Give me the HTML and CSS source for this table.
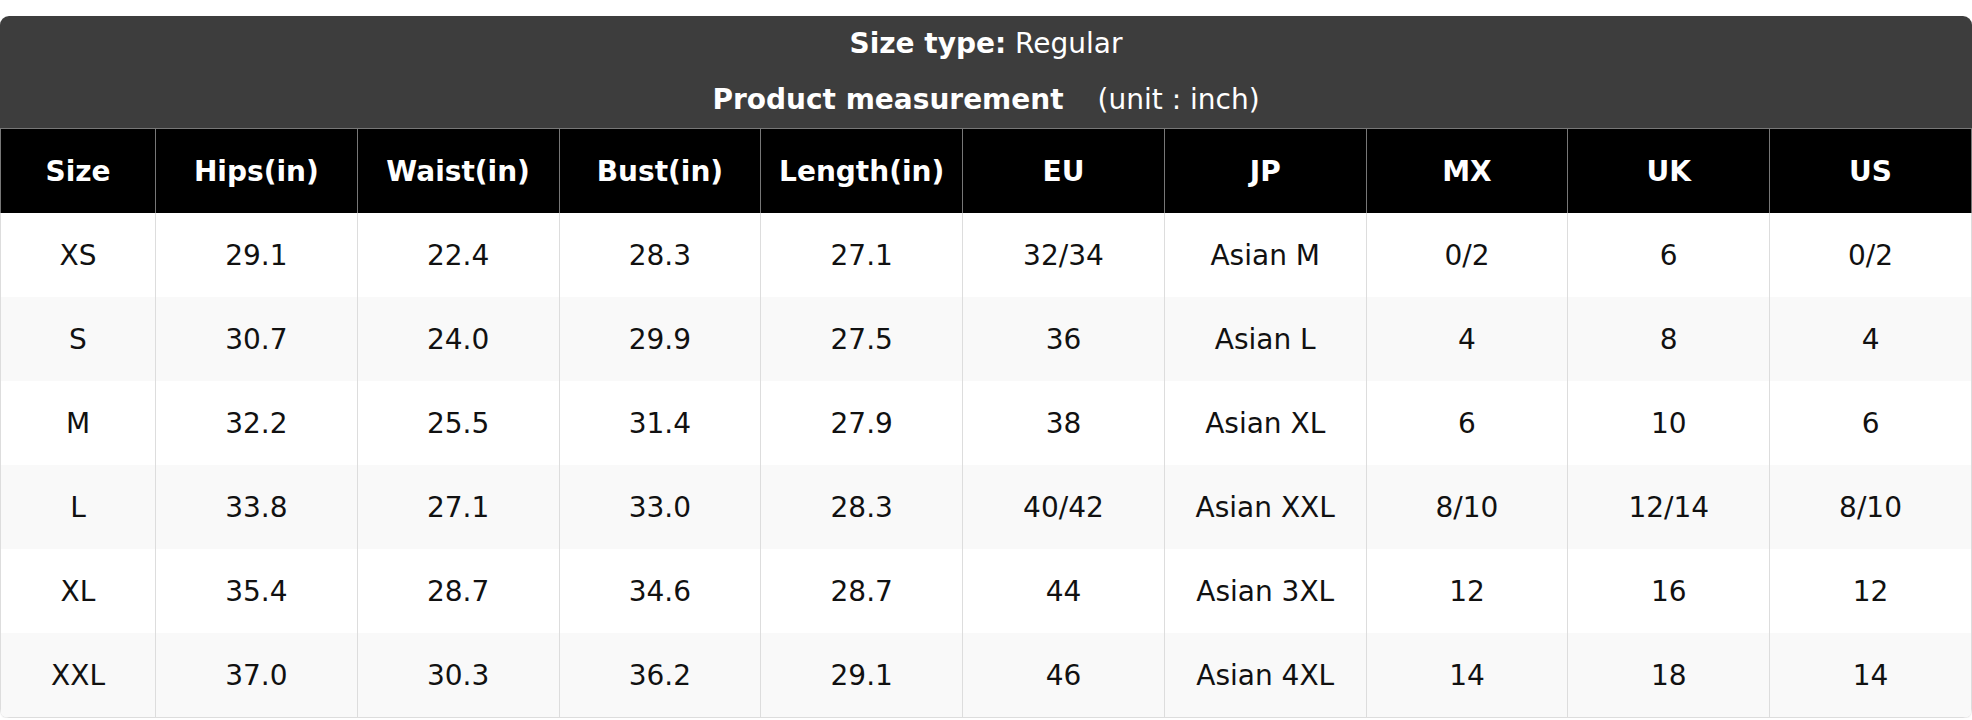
FILE: index.html
```html
<!DOCTYPE html>
<html lang="en">
<head>
<meta charset="utf-8">
<title>Size chart</title>
<link rel="stylesheet" href="styles.css">
</head>
<body>
<div class="chart">
  <div class="chart-title">
    <div class="title-line"><b>Size type:</b> Regular</div>
    <div class="title-line"><b>Product measurement</b><span class="unit">(unit : inch)</span></div>
  </div>
  <table class="size-table">
    <colgroup>
      <col class="col-size">
      <col><col><col><col><col><col><col><col><col>
    </colgroup>
    <thead>
      <tr>
        <th>Size</th><th>Hips(in)</th><th>Waist(in)</th><th>Bust(in)</th><th>Length(in)</th><th>EU</th><th>JP</th><th>MX</th><th>UK</th><th>US</th>
      </tr>
    </thead>
    <tbody>
      <tr><td>XS</td><td>29.1</td><td>22.4</td><td>28.3</td><td>27.1</td><td>32/34</td><td>Asian M</td><td>0/2</td><td>6</td><td>0/2</td></tr>
      <tr><td>S</td><td>30.7</td><td>24.0</td><td>29.9</td><td>27.5</td><td>36</td><td>Asian L</td><td>4</td><td>8</td><td>4</td></tr>
      <tr><td>M</td><td>32.2</td><td>25.5</td><td>31.4</td><td>27.9</td><td>38</td><td>Asian XL</td><td>6</td><td>10</td><td>6</td></tr>
      <tr><td>L</td><td>33.8</td><td>27.1</td><td>33.0</td><td>28.3</td><td>40/42</td><td>Asian XXL</td><td>8/10</td><td>12/14</td><td>8/10</td></tr>
      <tr><td>XL</td><td>35.4</td><td>28.7</td><td>34.6</td><td>28.7</td><td>44</td><td>Asian 3XL</td><td>12</td><td>16</td><td>12</td></tr>
      <tr><td>XXL</td><td>37.0</td><td>30.3</td><td>36.2</td><td>29.1</td><td>46</td><td>Asian 4XL</td><td>14</td><td>18</td><td>14</td></tr>
    </tbody>
  </table>
</div>
</body>
</html>
```
FILE: styles.css
```css
html, body {
  margin: 0;
  padding: 0;
  background: #fff;
}

body {
  padding-top: 16px;
  font-family: "DejaVu Sans", Verdana, sans-serif;
  font-size: 28px;
  color: #111;
}

.chart {
  width: 1972px;
  border-radius: 9px;
  overflow: hidden;
  box-shadow: 0 1px 2px rgba(0, 0, 0, 0.12);
}

.chart-title {
  background: #3d3d3d;
  color: #fff;
  text-align: center;
}

.title-line {
  height: 56px;
  line-height: 56px;
}

.title-line b {
  font-weight: bold;
}

.unit {
  margin-left: 34px;
}

.size-table {
  width: 100%;
  table-layout: fixed;
  border-collapse: collapse;
}

.col-size {
  width: 155px;
}

.size-table th {
  height: 84px;
  padding: 0;
  background: #000;
  color: #fff;
  font-weight: bold;
  text-align: center;
  border: 1px solid #777;
  border-bottom: none;
}

.size-table td {
  height: 84px;
  padding: 0;
  text-align: center;
  border-left: 1px solid #ddd;
  border-right: 1px solid #ddd;
}

.size-table tbody tr:nth-child(even) td {
  background: #f9f9f9;
}

.size-table tbody tr:last-child td {
  border-bottom: 1px solid #ddd;
}
```
